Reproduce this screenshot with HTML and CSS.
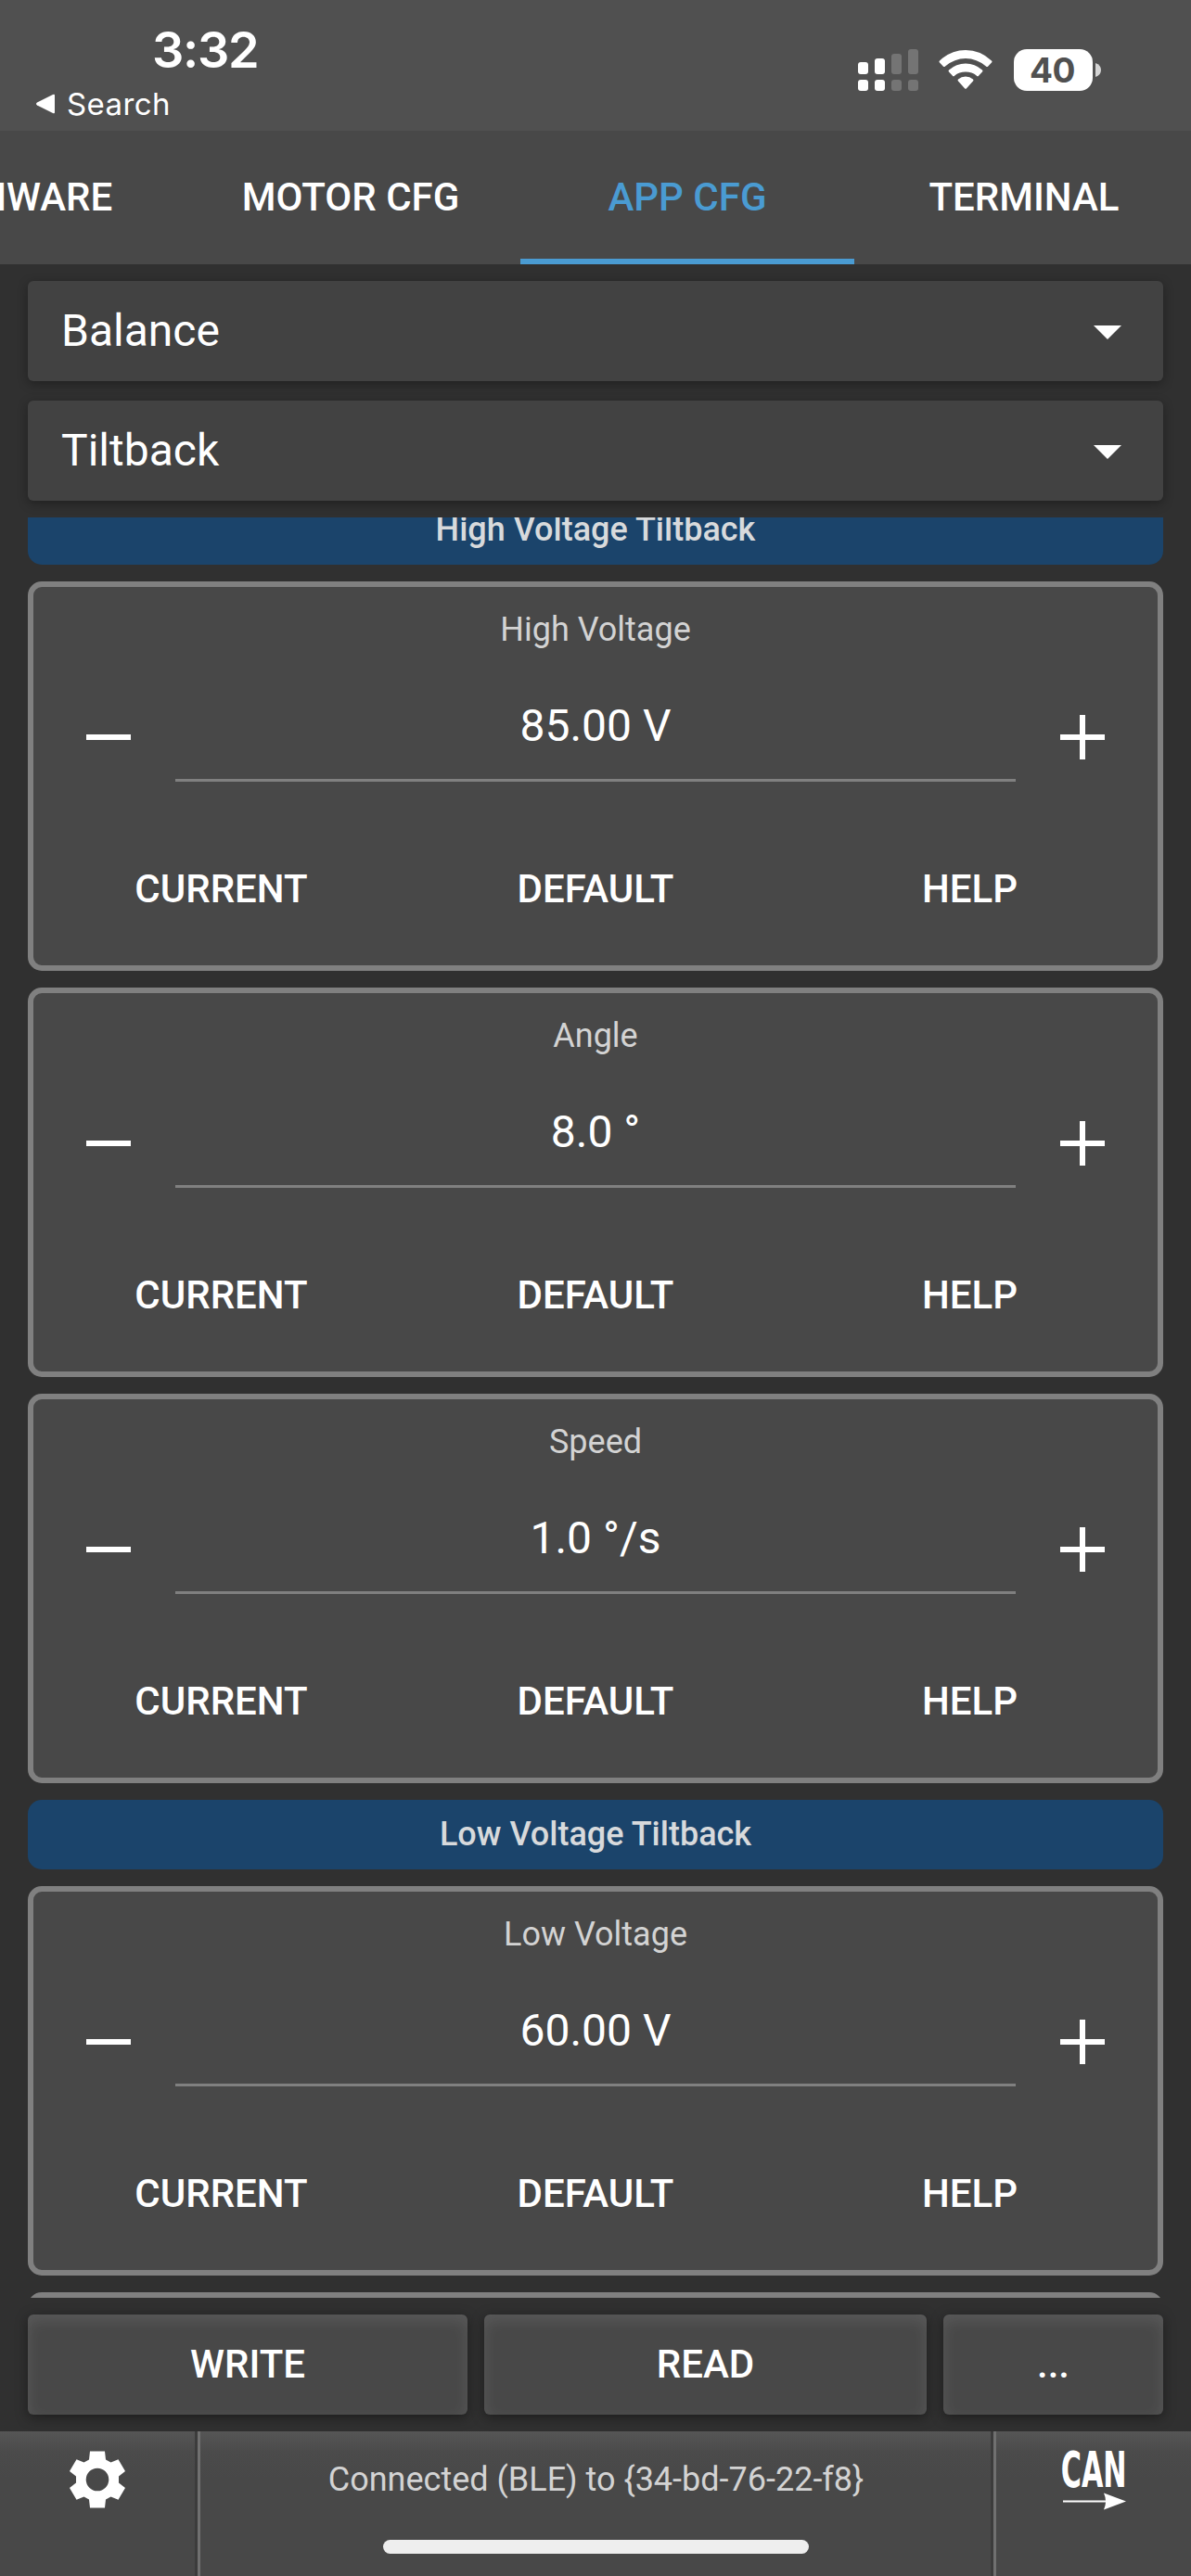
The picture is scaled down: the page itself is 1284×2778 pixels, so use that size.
FILE: index.html
```html
<!DOCTYPE html>
<html lang="en">
<head>
<meta charset="utf-8">
<title>App configuration</title>
<link rel="stylesheet" href="styles.css">
</head>
<body>
<div class="app">
  <header class="status">
    <div class="status-left">
      <div class="clock">3:32</div>
      <div class="back">
        <svg width="22" height="22" viewBox="0 0 22 22"><path d="M2 9.500L19 1q2-1 2 1v18q0 2-2 1L2 12.500q-2-1.500 0-3z" fill="#fff"/></svg>
        <span>Search</span>
      </div>
    </div>
    <div class="status-right">
      <svg class="signal" width="66" height="46" viewBox="0 0 66 46">
        <g fill="#fff"><rect x="0" y="14" width="11" height="13" rx="3"/><rect x="18" y="10" width="11" height="17" rx="3"/><rect x="0" y="33" width="11" height="12" rx="3"/><rect x="18" y="33" width="11" height="12" rx="3"/></g>
        <g fill="#747474"><rect x="36" y="5" width="11" height="22" rx="3"/><rect x="54" y="0" width="11" height="27" rx="3"/><rect x="36" y="33" width="11" height="12" rx="3"/><rect x="54" y="33" width="11" height="12" rx="3"/></g>
      </svg>
      <svg class="wifi" width="58" height="43" viewBox="0 0 58 43">
        <g fill="#fff"><path d="M1 11.500Q0 12.500 1 13.500L5 17.700Q6 18.500 7 17.500Q17 9 29 9T51 17.500Q52 18.500 53 17.700L57 13.500Q58 12.500 57 11.500Q45 0 29 0T1 11.500z"/><path d="M11 21.500Q10 22.500 11 23.500L15 27.700Q16 28.700 17 27.700Q22 23.500 29 23.500T41 27.700Q42 28.700 43 27.700L47 23.500Q48 22.500 47 21.500Q39 14.500 29 14.500T11 21.500z"/><path d="M21 31.500Q20 32.500 21 33.500L28 41.300Q29 42.300 30 41.300L37 33.500Q38 32.500 37 31.500Q33.500 28.500 29 28.500T21 31.500z"/></g>
      </svg>
      <div class="battery"><span>40</span></div>
      <svg class="cap" width="6" height="15" viewBox="0 0 6 15"><path d="M0 0Q6 2 6 7.500T0 15z" fill="#d4d4d4"/></svg>
    </div>
  </header>

  <nav class="tabs">
    <div class="tab">FIRMWARE</div>
    <div class="tab">MOTOR CFG</div>
    <div class="tab active">APP CFG</div>
    <div class="tab">TERMINAL</div>
  </nav>

  <section class="selects">
    <div class="select"><span>Balance</span><i class="arrow"></i></div>
    <div class="select"><span>Tiltback</span><i class="arrow"></i></div>
  </section>

  <main class="list">
    <h2 class="group">High Voltage Tiltback</h2>
    <article class="card">
      <div class="label">High Voltage</div>
      <div class="editor"><i class="minus"></i><div class="value">85.00 V</div><i class="plus"></i></div>
      <div class="actions"><span>CURRENT</span><span>DEFAULT</span><span>HELP</span></div>
    </article>
    <article class="card">
      <div class="label">Angle</div>
      <div class="editor"><i class="minus"></i><div class="value">8.0 °</div><i class="plus"></i></div>
      <div class="actions"><span>CURRENT</span><span>DEFAULT</span><span>HELP</span></div>
    </article>
    <article class="card">
      <div class="label">Speed</div>
      <div class="editor"><i class="minus"></i><div class="value">1.0 °/s</div><i class="plus"></i></div>
      <div class="actions"><span>CURRENT</span><span>DEFAULT</span><span>HELP</span></div>
    </article>
    <h2 class="group">Low Voltage Tiltback</h2>
    <article class="card">
      <div class="label">Low Voltage</div>
      <div class="editor"><i class="minus"></i><div class="value">60.00 V</div><i class="plus"></i></div>
      <div class="actions"><span>CURRENT</span><span>DEFAULT</span><span>HELP</span></div>
    </article>
    <article class="card"></article>
  </main>

  <section class="buttons">
    <div class="button">WRITE</div>
    <div class="button">READ</div>
    <div class="button">...</div>
  </section>

  <footer class="footer">
    <div class="cell side">
      <svg class="gear" width="62" height="62" viewBox="-31 -31 62 62"><path fill="#fff" fill-rule="evenodd" d="M-8-30.500H8L9-21.500 14.500-18.500 22.500-21.700 30-9 23-3.500V3.500L30 9 22.500 21.700 14.500 18.500 9 21.500 8 30.500H-8L-9 21.500-14.500 18.500-22.500 21.700-30 9-23 3.500V-3.500L-30-9-22.500-21.700-14.500-18.500-9-21.500zM0-12.300a12.300 12.300 0 1 0 0 24.600a12.300 12.300 0 1 0 0-24.600z"/></svg>
    </div>
    <div class="cell middle">
      <div class="connection">Connected (BLE) to {34-bd-76-22-f8}</div>
      <div class="home"></div>
    </div>
    <div class="cell side">
      <div class="can">
        <div class="can-text"><span>CAN</span></div>
        <svg width="70" height="19" viewBox="0 0 70 19"><path d="M1 9.500h46" stroke="#fff" stroke-width="2"/><path d="M45 .5l24 9-24 9q4-9 0-18z" fill="#fff"/></svg>
      </div>
    </div>
  </footer>
</div>
</body>
</html>
```
FILE: styles.css
```css
* { box-sizing: border-box; }
body { margin: 0; background: #303030; }
.app { width: 1284px; height: 2778px; display: flex; flex-direction: column; overflow: hidden; background: #303030; color: #fff; font-family: Roboto, "Noto Sans", sans-serif; }

.status { flex: none; height: 141px; background: #505050; display: flex; justify-content: space-between; font-family: Inter, "Liberation Sans", sans-serif; }
.status-left { padding-left: 38px; }
.clock { margin: 24px 0 0 126px; font-size: 54px; line-height: 60px; font-weight: 600; letter-spacing: -1.3px; }
.back { display: flex; align-items: center; gap: 12px; margin-top: 8px; font-size: 33px; line-height: 40px; letter-spacing: 0.4px; }
.status-right { display: flex; align-items: flex-start; padding: 53px 97px 0 0; }
.wifi { margin: 1px 0 0 21px; }
.battery { margin-left: 23px; width: 85px; height: 45px; padding-right: 2px; border-radius: 14px; background: #fff; color: #505050; font-size: 37px; line-height: 45px; font-weight: 700; text-align: center; letter-spacing: -0.5px; }
.cap { margin: 15px 0 0 3px; }

.tabs { flex: none; height: 144px; display: flex; gap: 3px; justify-content: flex-end; background: #484848; }
.tab { flex: none; width: 360px; padding-top: 47px; line-height: 50px; font-size: 42px; font-weight: 500; text-align: center; border-bottom: 6px solid transparent; }
.tab.active { color: #4a9bd2; border-bottom-color: #4a9bd2; }

.selects { flex: none; padding: 18px 30px; display: flex; flex-direction: column; gap: 21px; }
.select { height: 108px; padding: 0 45px 0 36px; display: flex; align-items: center; justify-content: space-between; font-size: 48px; line-height: 56px; background: #424242; border-radius: 6px; box-shadow: 0 3px 12px rgba(0, 0, 0, 0.32); }
.arrow { width: 30px; height: 15px; margin-top: 3px; background: #fff; clip-path: polygon(0 0, 100% 0, 50% 100%); }

.list { flex: none; height: 1920px; padding: 0 30px; overflow: hidden; background: #303030; position: relative; }
.group { margin: 0 0 18px; height: 75px; border-radius: 15px; background: #1b446b; color: #d8dadc; font-size: 36px; line-height: 74px; font-weight: 500; text-align: center; }
.group:first-child { margin-top: -24px; }
.card { height: 420px; margin-bottom: 18px; padding-top: 25px; background: #484848; border: 6px solid #808080; border-radius: 15px; }
.label { color: #d3d3d3; font-size: 36px; line-height: 42px; text-align: center; }
.editor { display: flex; align-items: flex-end; justify-content: space-between; padding: 11px 57px 0; }
.value { width: 906px; height: 132px; padding-top: 9px; font-size: 48px; line-height: 126px; height: 132px; text-align: center; border-bottom: 3px solid #808080; }
.minus, .plus { width: 48px; height: 48px; margin-bottom: 24px; background: linear-gradient(#fff, #fff) center / 48px 6px no-repeat; }
.plus { background: linear-gradient(#fff, #fff) center / 48px 6px no-repeat, linear-gradient(#fff, #fff) center / 6px 48px no-repeat; }
.actions { display: grid; grid-template-columns: repeat(3, 403.5px); justify-content: center; padding-top: 91px; font-size: 42px; line-height: 50px; font-weight: 500; text-align: center; }

.buttons { flex: none; display: grid; grid-template-columns: 474px 477px 237px; gap: 18px; padding: 18px 30px; }
.button { height: 108px; padding-top: 29px; border-radius: 6px; font-size: 42px; line-height: 50px; font-weight: 500; text-align: center; background: #484848; box-shadow: 0 3px 14px rgba(0, 0, 0, 0.4), inset 0 6px 16px rgba(255, 255, 255, 0.1); }

.footer { flex: none; height: 156px; display: grid; grid-template-columns: 213px 858px 213px; background: linear-gradient(#565656, #4b4b4b 21px, #484848 50px); }
.cell { display: flex; flex-direction: column; align-items: center; }
.middle { border-left: 3px solid #707070; box-shadow: -3px 0 0 #3c3c3c, inset -3px 0 0 #3c3c3c; }
.middle + .side { border-left: 3px solid #707070; }
.gear { margin-top: 21px; margin-right: 3px; }
.connection { margin: 31px 2px 0 0; color: #d3d3d3; font-size: 36px; line-height: 42px; }
.home { width: 459px; height: 15px; margin: 44px 3px 0 0; border-radius: 8px; background: #eee; }
.can { width: 70px; margin: 12px 0 0 1px; display: flex; flex-direction: column; }
.can-text { display: flex; justify-content: center; height: 54px; font: 700 53px/60px "DejaVu Sans", sans-serif; }
.can-text span { flex: none; transform: scaleX(0.57); }
```
